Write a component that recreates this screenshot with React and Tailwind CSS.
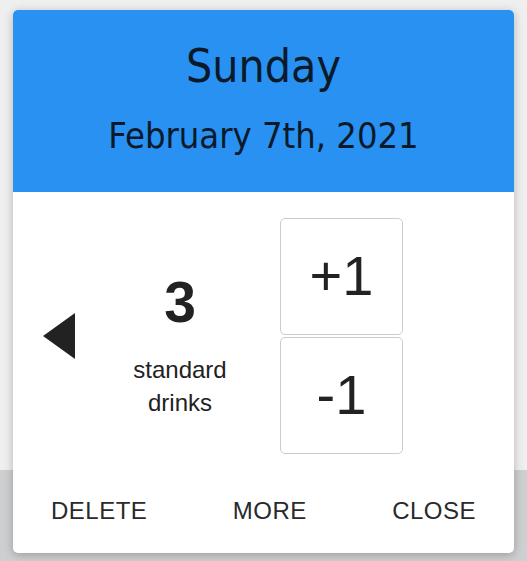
import React, { useState } from 'react';

const headFont = { fontFamily: '"DejaVu Sans Condensed", "DejaVu Sans", sans-serif' };

export default function App() {
  const [count, setCount] = useState(3);

  return (
    <div className="relative w-[527px] h-[561px] overflow-hidden" style={{ fontFamily: '"Liberation Sans", Arial, sans-serif' }}>
      {/* dimmed page behind the dialog */}
      <div className="flex flex-col h-full">
        <div className="h-[470px] bg-[#efefef]" />
        <div className="flex-1 bg-[#cdcfd1]" />
      </div>

      <div className="absolute left-[13px] top-[10px] w-[501px] h-[543px] bg-white rounded-[5px] shadow-[0_2px_10px_rgba(0,0,0,0.25)] flex flex-col overflow-hidden">
        <header className="h-[182px] bg-[#2891f1] text-[#0b1a2a] flex flex-col items-center pt-[30px]" style={headFont}>
          <h1 className="text-[46px] leading-[52px]">Sunday</h1>
          <h2 className="text-[36px] leading-[40px] mt-[24px]">February 7th, 2021</h2>
        </header>

        <main className="flex items-center h-[278px] pl-[30px] pt-[9px]">
          <button className="w-[32px] h-[46px] text-[#222]" aria-label="Previous day">
            <svg viewBox="0 0 32 46" className="w-[32px] h-[46px]">
              <polygon points="32,0 32,46 0,23" fill="currentColor" />
            </svg>
          </button>
          <div className="w-[210px] flex flex-col items-center text-[#222] mt-[22px]">
            <div className="text-[57px] font-bold leading-none">{count}</div>
            <div className="text-[24px] leading-[33px] mt-[22px] text-center">
              standard
              <br />
              drinks
            </div>
          </div>
          <div className="flex flex-col gap-[2px] -ml-[5px]">
            <button
              onClick={() => setCount(count + 1)}
              className="w-[123px] h-[117px] border border-[#cccccc] rounded-[5px] text-[56px] text-[#222] bg-white"
            >
              +1
            </button>
            <button
              onClick={() => setCount(Math.max(0, count - 1))}
              className="w-[123px] h-[117px] border border-[#cccccc] rounded-[5px] text-[56px] text-[#222] bg-white"
            >
              -1
            </button>
          </div>
        </main>

        <footer className="flex justify-between items-center px-[38px] pt-[23px] text-[24px] tracking-[0.5px] text-[#2a2a2a]">
          <button>DELETE</button>
          <button>MORE</button>
          <button>CLOSE</button>
        </footer>
      </div>
    </div>
  );
}
